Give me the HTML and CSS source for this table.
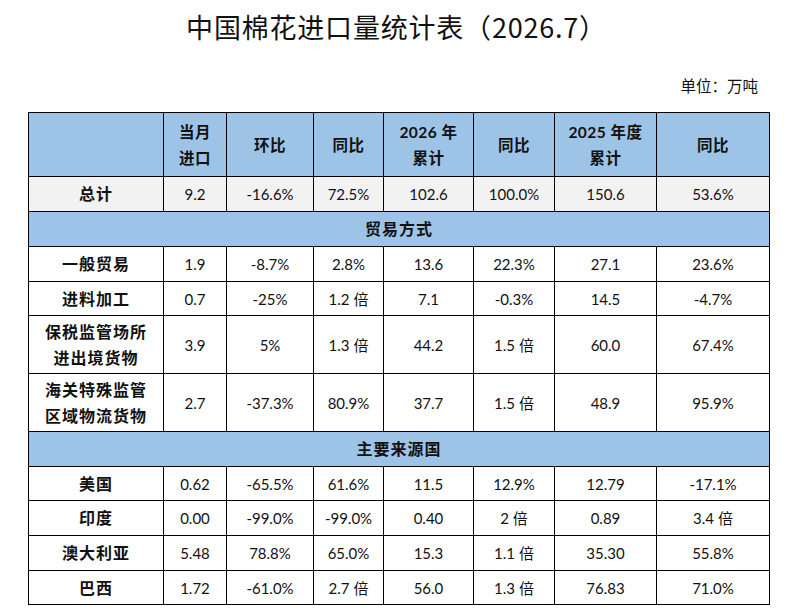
FILE: index.html
```html
<!DOCTYPE html>
<html lang="zh-CN">
<head>
<meta charset="utf-8">
<title>中国棉花进口量统计表</title>
<link rel="stylesheet" href="styles.css">
</head>
<body>
<h1 class="title">中国棉花进口量统计表（2026.7）</h1>
<div class="unit">单位：万吨</div>
<table class="stats">
  <colgroup>
    <col class="c1"><col class="c2"><col class="c3"><col class="c4"><col class="c5"><col class="c6"><col class="c7"><col class="c8">
  </colgroup>
  <thead>
    <tr class="h-head">
      <th></th>
      <th>当月<br>进口</th>
      <th>环比</th>
      <th>同比</th>
      <th>2026 年<br>累计</th>
      <th>同比</th>
      <th>2025 年度<br>累计</th>
      <th>同比</th>
    </tr>
  </thead>
  <tbody>
    <tr class="h35 total">
      <th>总计</th><td>9.2</td><td>-16.6%</td><td>72.5%</td><td>102.6</td><td>100.0%</td><td>150.6</td><td>53.6%</td>
    </tr>
    <tr class="h35 section">
      <th colspan="8">贸易方式</th>
    </tr>
    <tr class="h35">
      <th>一般贸易</th><td>1.9</td><td>-8.7%</td><td>2.8%</td><td>13.6</td><td>22.3%</td><td>27.1</td><td>23.6%</td>
    </tr>
    <tr class="h34">
      <th>进料加工</th><td>0.7</td><td>-25%</td><td>1.2 倍</td><td>7.1</td><td>-0.3%</td><td>14.5</td><td>-4.7%</td>
    </tr>
    <tr class="h58">
      <th>保税监管场所<br>进出境货物</th><td>3.9</td><td>5%</td><td>1.3 倍</td><td>44.2</td><td>1.5 倍</td><td>60.0</td><td>67.4%</td>
    </tr>
    <tr class="h58">
      <th>海关特殊监管<br>区域物流货物</th><td>2.7</td><td>-37.3%</td><td>80.9%</td><td>37.7</td><td>1.5 倍</td><td>48.9</td><td>95.9%</td>
    </tr>
    <tr class="h35 section">
      <th colspan="8">主要来源国</th>
    </tr>
    <tr class="h34">
      <th>美国</th><td>0.62</td><td>-65.5%</td><td>61.6%</td><td>11.5</td><td>12.9%</td><td>12.79</td><td>-17.1%</td>
    </tr>
    <tr class="h35">
      <th>印度</th><td>0.00</td><td>-99.0%</td><td>-99.0%</td><td>0.40</td><td>2 倍</td><td>0.89</td><td>3.4 倍</td>
    </tr>
    <tr class="h35">
      <th>澳大利亚</th><td>5.48</td><td>78.8%</td><td>65.0%</td><td>15.3</td><td>1.1 倍</td><td>35.30</td><td>55.8%</td>
    </tr>
    <tr class="h34">
      <th>巴西</th><td>1.72</td><td>-61.0%</td><td>2.7 倍</td><td>56.0</td><td>1.3 倍</td><td>76.83</td><td>71.0%</td>
    </tr>
  </tbody>
</table>
</body>
</html>
```

FILE: styles.css
```css
html, body {
  margin: 0;
  padding: 0;
  background: #ffffff;
  color: #000000;
}

body {
  width: 793px;
  font-family: Lato, "Noto Sans CJK SC", sans-serif;
}

.title {
  margin: 0;
  height: 54px;
  line-height: 54px;
  text-align: center;
  font-family: "Noto Sans CJK SC", sans-serif;
  font-size: 27px;
  font-weight: 400;
  letter-spacing: 0.8px;
  color: #111;
}

.unit {
  margin: 21px 0 17px;
  height: 20px;
  line-height: 20px;
  padding-right: 35px;
  text-align: right;
  font-family: "Noto Sans CJK SC", sans-serif;
  font-size: 15.5px;
  color: #111;
}

.stats {
  margin-left: 28px;
  width: 741px;
  border-collapse: collapse;
  table-layout: fixed;
}

.c1 { width: 135px; }
.c2 { width: 63px; }
.c3 { width: 87px; }
.c4 { width: 70px; }
.c5 { width: 90px; }
.c6 { width: 81px; }
.c7 { width: 102px; }
.c8 { width: 113px; }

.stats th,
.stats td {
  border: 1px solid #000;
  padding: 0;
  text-align: center;
  vertical-align: middle;
  line-height: 26px;
  color: #111;
}

.stats td {
  font-family: Lato, "Noto Sans CJK SC", sans-serif;
  font-size: 15px;
  font-weight: 400;
}

.stats th {
  font-family: Lato, "Noto Sans CJK SC", sans-serif;
  font-size: 16px;
  font-weight: 700;
  letter-spacing: 1px;
}

.h-head { height: 64px; }
.h-head th {
  background: #9dc3e6;
  font-size: 15.5px;
  letter-spacing: 0.5px;
}

.h35 { height: 35px; }
.h34 { height: 34px; }
.h58 { height: 58px; }

.total th,
.total td {
  background: #f2f2f2;
}

.section th {
  background: #9dc3e6;
}
```
